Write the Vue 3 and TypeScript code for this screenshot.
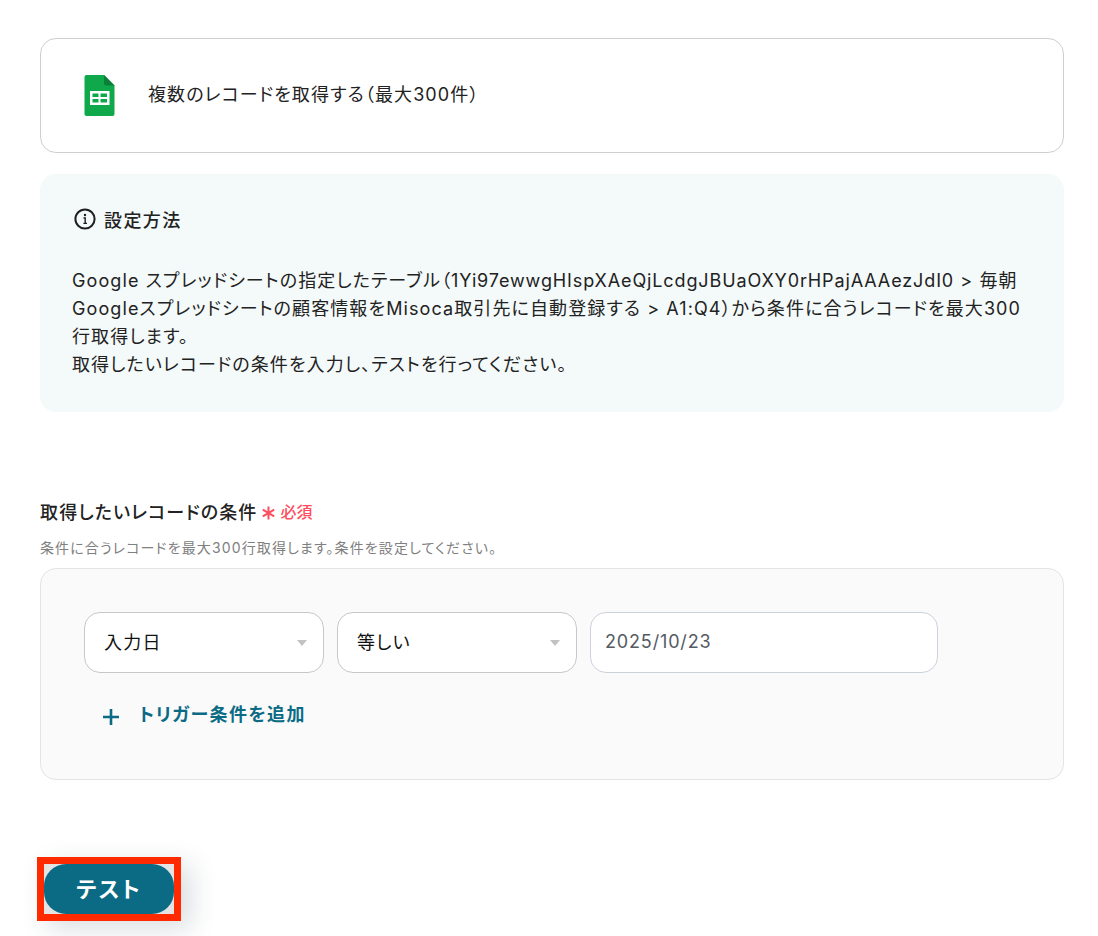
<script setup lang="ts">
const sheetId: string = '1Yi97ewwgHIspXAeQjLcdgJBUaOXY0rHPajAAAezJdI0'
</script>

<template>
  <main class="page">
    <section class="card">
      <svg class="sheet" width="31" height="41" viewBox="0 0 30 41" aria-hidden="true">
        <path d="M2 0H19.5L30 10.5V39a2 2 0 0 1-2 2H2a2 2 0 0 1-2-2V2a2 2 0 0 1 2-2Z" fill="#0FA94B" />
        <path d="M19.5 0L30 10.5H21.5a2 2 0 0 1-2-2Z" fill="#0A7F39" />
        <path d="M5.5 16H25V30H5.5Z" fill="#fff" />
        <path d="M8 18.5H14V22H8ZM16 18.5H22.5V22H16ZM8 24H14V27.5H8ZM16 24H22.5V27.5H16Z" fill="#0FA94B" />
      </svg>
      <span class="card-title">複数のレコードを取得する（最大300件）</span>
    </section>

    <section class="info">
      <div class="info-head">
        <svg width="22" height="22" viewBox="0 0 22 22" aria-hidden="true">
          <circle cx="11" cy="11" r="9.6" fill="none" stroke="#1f1f1f" stroke-width="2" />
          <circle cx="11" cy="7" r="1.2" fill="#1f1f1f" />
          <path d="M9.5 10H11.2V15.4M9.4 15.4H13" fill="none" stroke="#1f1f1f" stroke-width="1.4" />
        </svg>
        <span>設定方法</span>
      </div>
      <div class="info-body">
        <div>Google スプレッドシートの指定したテーブル（<span class="id">{{ sheetId }}</span> &gt; 毎朝</div>
        <div>Googleスプレッドシートの顧客情報をMisoca取引先に自動登録する &gt; A1:Q4）から条件に合うレコードを最大300</div>
        <div>行取得します。</div>
        <div>取得したいレコードの条件を入力し、テストを行ってください。</div>
      </div>
    </section>

    <section class="field">
      <div class="label-row">
        <span class="label">取得したいレコードの条件</span>
        <span class="req">
          <svg class="star" width="13" height="14" viewBox="0 0 13 14" aria-hidden="true">
            <path d="M6.5 0.5V13.5M0.8 3.6L12.2 10.4M12.2 3.6L0.8 10.4" stroke="#ff4d5e" stroke-width="2" fill="none" />
          </svg>
          <span>必須</span>
        </span>
      </div>
      <p class="hint">条件に合うレコードを最大300行取得します。条件を設定してください。</p>
      <div class="panel">
        <div class="controls">
          <div class="select"><span>入力日</span><i class="caret"></i></div>
          <div class="select"><span>等しい</span><i class="caret"></i></div>
          <div class="input">2025/10/23</div>
        </div>
        <div class="add">
          <svg width="18" height="18" viewBox="0 0 18 18" aria-hidden="true">
            <path d="M9 1V17M1 9H17" stroke="#0b6b85" stroke-width="2.6" fill="none" />
          </svg>
          <span>トリガー条件を追加</span>
        </div>
      </div>
    </section>

    <div class="test-mark">
      <button class="test" type="button">テスト</button>
    </div>
  </main>
</template>

<style scoped>
.page {
  box-sizing: border-box;
  width: 1098px;
  height: 936px;
  overflow: hidden;
  padding: 38px 34px 0 40px;
  background: #fff;
  color: #222;
  font-family: Inter, "Noto Sans CJK JP", sans-serif;
  font-feature-settings: "palt";
}
.card {
  box-sizing: border-box;
  height: 115px;
  border: 1px solid #cfcfcf;
  border-radius: 16px;
  display: flex;
  align-items: center;
  padding-left: 43px;
  gap: 33px;
}
.sheet {
  flex: none;
}
.card-title {
  font-size: 18px;
  letter-spacing: 1.12px;
  line-height: 28px;
  margin-top: -1px;
}
.info {
  box-sizing: border-box;
  height: 238px;
  margin-top: 21px;
  padding: 33px 32px 0;
  border-radius: 16px;
  background: #f4f9f9;
}
.info-head {
  display: flex;
  align-items: center;
  gap: 8px;
  margin-left: 2px;
  height: 24px;
  font-size: 18px;
  font-weight: 500;
  letter-spacing: 1.4px;
}
.info-body {
  margin-top: 36px;
  font-size: 18px;
  line-height: 28px;
  letter-spacing: 1.1px;
  white-space: nowrap;
}
.id {
  letter-spacing: 0.88px;
}
.field {
  margin-top: 86px;
}
.label-row {
  display: flex;
  align-items: center;
  height: 26px;
}
.label {
  font-size: 18px;
  font-weight: 500;
  letter-spacing: 1.15px;
}
.req {
  display: flex;
  align-items: center;
  gap: 5px;
  margin-left: 5px;
  color: #ff4d5e;
  font-size: 16px;
  font-weight: 500;
}
.star {
  flex: none;
  margin-top: 4px;
}
.hint {
  margin: 15px 0 0;
  color: #808080;
  font-size: 14px;
  line-height: 18px;
  letter-spacing: 1.12px;
}
.panel {
  box-sizing: border-box;
  height: 212px;
  margin-top: 11px;
  padding: 43px 43px 0;
  border: 1px solid #e2e4e6;
  border-radius: 16px;
  background: #fafafb;
}
.controls {
  display: flex;
  gap: 13px;
}
.select,
.input {
  box-sizing: border-box;
  height: 61px;
  background: #fff;
  border-radius: 16px;
}
.select {
  width: 240px;
  border: 1px solid #c8c8c8;
  display: flex;
  align-items: center;
  justify-content: space-between;
  padding: 0 16px 0 19px;
  font-size: 18px;
  letter-spacing: 1.2px;
  color: #111;
}
.select span {
  margin-top: -4px;
}
.caret {
  width: 0;
  height: 0;
  margin-top: 1px;
  border-left: 5.5px solid transparent;
  border-right: 5.5px solid transparent;
  border-top: 6px solid #c2c2c2;
}
.input {
  width: 348px;
  border: 1px solid #ccd2dc;
  padding: 17px 14px 0;
  font-size: 18px;
  line-height: 24px;
  letter-spacing: 0.85px;
  color: #555a63;
}
.add {
  display: flex;
  align-items: center;
  gap: 19px;
  height: 28px;
  margin-top: 28px;
  margin-left: 18px;
  color: #0b6b85;
  font-size: 18px;
  font-weight: 700;
  letter-spacing: 1.4px;
}
.add svg {
  flex: none;
  margin-top: 3px;
}
.add span {
  margin-top: -5px;
}
.test-mark {
  box-sizing: border-box;
  width: 144px;
  height: 64px;
  margin-top: 77px;
  margin-left: -3px;
  border: 7px solid #ff2a00;
  background: #e4e4e4;
  box-shadow: 10px 8px 26px rgba(30, 50, 70, 0.16);
}
.test {
  display: block;
  width: 100%;
  height: 100%;
  margin: 0;
  padding: 0 0 4px;
  border: 0;
  border-radius: 22px;
  background: #0b6b85;
  color: #fff;
  font-family: inherit;
  font-feature-settings: inherit;
  font-size: 22px;
  font-weight: 700;
  letter-spacing: 2px;
}
</style>
